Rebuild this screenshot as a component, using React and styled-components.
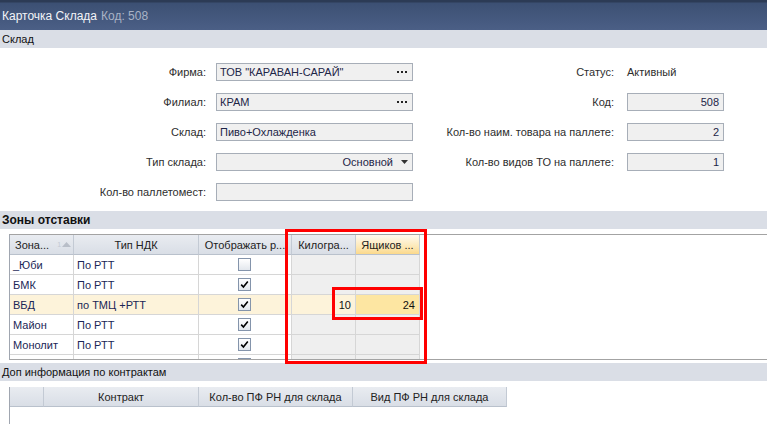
import React from 'react';
import styled, { createGlobalStyle } from 'styled-components';

const Global = createGlobalStyle`
  html, body { margin: 0; padding: 0; background: #fff; }
  body { font-family: "Liberation Sans", Arial, sans-serif; font-size: 11px; color: #222; }
`;

const Window = styled.div`
  position: relative;
  width: 767px;
  height: 424px;
  overflow: hidden;
  background: #fff;
  display: flex;
  flex-direction: column;
`;

const TitleBar = styled.div`
  height: 30px;
  flex: none;
  box-sizing: border-box;
  background: linear-gradient(#2c3b55 0, #2c3b55 2px, #3c5073 3px, #4b5f86 100%);
  display: flex;
  align-items: center;
  gap: 4px;
  padding: 2px 0 0 2px;
  font-size: 12px;
  color: #f2f4f8;
`;

const TitleSub = styled.span`
  color: #a9b3c6;
`;

const SectionHeader = styled.div`
  height: 18px;
  flex: none;
  background: #dadee6;
  display: flex;
  align-items: center;
  padding-left: 2px;
  font-size: ${p => (p.$bold ? '12px' : '11px')};
  font-weight: ${p => (p.$bold ? 700 : 400)};
  color: #111;
`;

const Form = styled.div`
  flex: none;
  height: 163px;
  box-sizing: border-box;
  padding-top: 15px;
  display: flex;
`;

const FormCol = styled.div`
  width: ${p => p.$w}px;
  display: flex;
  flex-direction: column;
  gap: 12px;
`;

const FieldRow = styled.div`
  height: 18px;
  display: grid;
  grid-template-columns: ${p => p.$label}px ${p => p.$field}px;
  column-gap: ${p => p.$gap}px;
  align-items: center;
`;

const Label = styled.div`
  text-align: right;
  color: #2e2e2e;
  white-space: nowrap;
`;

const Field = styled.div`
  height: 18px;
  box-sizing: border-box;
  border: 1px solid #a7aeb8;
  background: #f0f0f0;
  display: flex;
  align-items: center;
  justify-content: ${p => (p.$right ? 'flex-end' : 'space-between')};
  gap: 8px;
  padding: 0 4px 0 3px;
  color: #1d2547;
  white-space: nowrap;
`;

const PlainValue = styled.div`
  color: #2e2e2e;
`;

const Dots = () => (
  <svg width="11" height="3" viewBox="0 0 11 3">
    <rect x="0" y="0" width="2" height="2" fill="#222" />
    <rect x="4" y="0" width="2" height="2" fill="#222" />
    <rect x="8" y="0" width="2" height="2" fill="#222" />
  </svg>
);

const Arrow = () => (
  <svg width="7" height="4" viewBox="0 0 7 4">
    <path d="M0 0 H7 L3.5 4 Z" fill="#333" />
  </svg>
);

const GridWrap = styled.div`
  flex: none;
  padding: ${p => p.$pad};
`;

const GridFrame = styled.div`
  margin-left: 9px;
  height: ${p => p.$h}px;
  box-sizing: border-box;
  border-left: 1px solid #a0a6b0;
  border-top: ${p => (p.$frame ? '1px solid #a3a3a3' : 'none')};
  border-bottom: ${p => (p.$frame ? '1px solid #a3a3a3' : 'none')};
  overflow: hidden;
`;

const Row = styled.div`
  display: grid;
  grid-template-columns: ${p => p.$cols};
  height: ${p => p.$h || 20}px;
`;

const HeadCell = styled.div`
  box-sizing: border-box;
  border-right: 1px solid #c3cad4;
  border-bottom: 1px solid #b9c1cc;
  background: ${p =>
    p.$focus
      ? 'linear-gradient(#fffaf0, #fde9b8 60%, #fbd98c)'
      : 'linear-gradient(#e9ecf1, #d9dee6)'};
  display: flex;
  align-items: center;
  justify-content: ${p => (p.$left ? 'flex-start' : 'center')};
  padding: 0 5px;
  gap: 8px;
  color: #222;
  white-space: nowrap;
  overflow: hidden;
`;

const SortMark = styled.span`
  display: inline-flex;
  align-items: center;
  gap: 1px;
  font-size: 7px;
  color: #c4c9d2;
`;

const Cell = styled.div`
  box-sizing: border-box;
  border-right: 1px solid #d6d6d6;
  border-bottom: 1px solid #d6d6d6;
  background: ${p => p.$bg || '#fff'};
  display: flex;
  align-items: center;
  justify-content: ${p => (p.$align === 'center' ? 'center' : p.$align === 'right' ? 'flex-end' : 'flex-start')};
  padding: 0 4px 0 3px;
  color: ${p => (p.$dark ? '#111' : '#1a2656')};
  white-space: nowrap;
  overflow: hidden;
`;

const Box = styled.div`
  width: 13px;
  height: 13px;
  box-sizing: border-box;
  border: 1px solid #8494ab;
  background: linear-gradient(#ffffff, #e3e7ed);
  display: flex;
  align-items: center;
  justify-content: center;
  align-self: ${p => (p.$top ? 'flex-start' : 'center')};
  margin-top: ${p => (p.$top ? '3px' : '0')};
`;

const Check = ({ on, top }) => (
  <Box $top={top}>
    {on && (
      <svg width="9" height="9" viewBox="0 0 9 9">
        <path d="M1.2 4.6 L3.4 7 L7.8 1.4" fill="none" stroke="#000" strokeWidth="1.6" />
      </svg>
    )}
  </Box>
);

const Annotation = styled.div`
  position: absolute;
  left: ${p => p.$x}px;
  top: ${p => p.$y}px;
  width: ${p => p.$w}px;
  height: ${p => p.$h}px;
  box-sizing: border-box;
  border: 3px solid #ff0000;
  pointer-events: none;
`;

const zoneCols = '64px 125px 93px 64px 64px';
const contractCols = '34px 155px 154px 154px';

const CREAM = '#fdf3da';
const GREY = '#efefef';
const HILITE = '#fde6a2';

const zones = [
  { z: '_Юби', t: 'По РТТ', on: false },
  { z: 'БМК', t: 'По РТТ', on: true },
  { z: 'ВБД', t: 'по ТМЦ +РТТ', on: true, sel: true, kg: '10', box: '24' },
  { z: 'Майон', t: 'По РТТ', on: true },
  { z: 'Монолит', t: 'По РТТ', on: true },
  { z: '', t: '', on: true, cut: true },
];

export default function App() {
  return (
    <>
      <Global />
      <Window>
        <TitleBar>
          <span>Карточка Склада</span>
          <TitleSub>Код: 508</TitleSub>
        </TitleBar>

        <SectionHeader>Склад</SectionHeader>

        <Form>
          <FormCol $w={413}>
            <FieldRow $label={206} $field={197} $gap={10}>
              <Label>Фирма:</Label>
              <Field><span>ТОВ "КАРАВАН-САРАЙ"</span><Dots /></Field>
            </FieldRow>
            <FieldRow $label={206} $field={197} $gap={10}>
              <Label>Филиал:</Label>
              <Field><span>КРАМ</span><Dots /></Field>
            </FieldRow>
            <FieldRow $label={206} $field={197} $gap={10}>
              <Label>Склад:</Label>
              <Field><span>Пиво+Охлажденка</span></Field>
            </FieldRow>
            <FieldRow $label={206} $field={197} $gap={10}>
              <Label>Тип склада:</Label>
              <Field $right><span>Основной</span><Arrow /></Field>
            </FieldRow>
            <FieldRow $label={206} $field={197} $gap={10}>
              <Label>Кол-во паллетомест:</Label>
              <Field />
            </FieldRow>
          </FormCol>
          <FormCol $w={354}>
            <FieldRow $label={201} $field={97} $gap={13}>
              <Label>Статус:</Label>
              <PlainValue>Активный</PlainValue>
            </FieldRow>
            <FieldRow $label={201} $field={97} $gap={13}>
              <Label>Код:</Label>
              <Field $right><span>508</span></Field>
            </FieldRow>
            <FieldRow $label={201} $field={97} $gap={13}>
              <Label>Кол-во наим. товара на паллете:</Label>
              <Field $right><span>2</span></Field>
            </FieldRow>
            <FieldRow $label={201} $field={97} $gap={13}>
              <Label>Кол-во видов ТО на паллете:</Label>
              <Field $right><span>1</span></Field>
            </FieldRow>
          </FormCol>
        </Form>

        <SectionHeader $bold>Зоны отставки</SectionHeader>

        <GridWrap $pad="5px 0 3px">
          <GridFrame $h={126} $frame>
            <Row $cols={zoneCols}>
              <HeadCell $left>
                <span>Зона...</span>
                <SortMark>
                  1
                  <svg width="9" height="5" viewBox="0 0 9 5"><path d="M0 5 L4.5 0 L9 5 Z" fill="#b8bec8" /></svg>
                </SortMark>
              </HeadCell>
              <HeadCell>Тип НДК</HeadCell>
              <HeadCell>Отображать р...</HeadCell>
              <HeadCell>Килогра...</HeadCell>
              <HeadCell $focus>Ящиков ...</HeadCell>
            </Row>
            {zones.map((r, i) => (
              <Row key={i} $cols={zoneCols}>
                <Cell $bg={r.sel ? CREAM : '#fff'}>{r.z}</Cell>
                <Cell $bg={r.sel ? CREAM : '#fff'}>{r.t}</Cell>
                <Cell $bg={r.sel ? CREAM : '#fff'} $align="center">
                  <Check on={r.on} top={r.cut} />
                </Cell>
                <Cell $bg={r.sel ? CREAM : GREY} $align="right" $dark>{r.kg}</Cell>
                <Cell $bg={r.sel ? HILITE : GREY} $align="right" $dark>{r.box}</Cell>
              </Row>
            ))}
          </GridFrame>
        </GridWrap>

        <SectionHeader>Доп информация по контрактам</SectionHeader>

        <GridWrap $pad="6px 0 0">
          <GridFrame $h={40}>
            <Row $cols={contractCols}>
              <HeadCell />
              <HeadCell>Контракт</HeadCell>
              <HeadCell>Кол-во ПФ РН для склада</HeadCell>
              <HeadCell>Вид ПФ РН для склада</HeadCell>
            </Row>
          </GridFrame>
        </GridWrap>

        <Annotation $x={285} $y={229} $w={142} $h={135} />
        <Annotation $x={332} $y={287} $w={91} $h={33} />
      </Window>
    </>
  );
}
